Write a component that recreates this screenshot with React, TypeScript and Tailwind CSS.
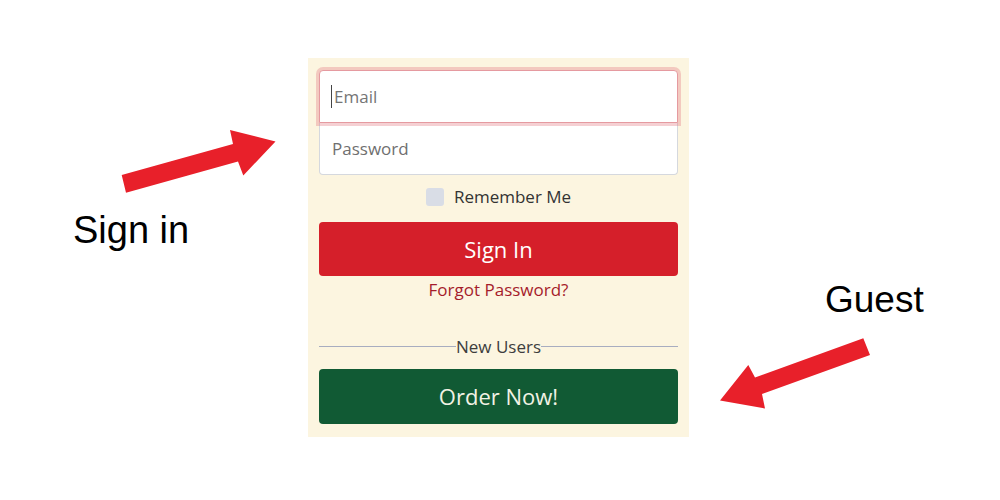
import React from 'react';

const uiFont = { fontFamily: '"Open Sans", "Noto Sans", sans-serif' };

function Arrows() {
  return (
    <svg
      className="absolute inset-0 pointer-events-none"
      width={1000}
      height={500}
      viewBox="0 0 1000 500"
    >
      {/* sign in arrow */}
      <polygon
        fill="#e8202a"
        points="121.7,175 233,144 230,130 275.5,141.5 243.3,175.5 238,161.5 126,192.7"
      />
      {/* guest arrow */}
      <polygon
        fill="#e8202a"
        points="863.3,338.3 755,377.5 748.3,365 720,400.5 765,408.5 762,394 870,355"
      />
    </svg>
  );
}

export default function App() {
  return (
    <div className="relative w-full h-[500px] bg-white overflow-hidden" style={uiFont}>
      <div className="flex pl-[308px] pt-[58px]">
        <div className="w-[381px] bg-[#fcf5e0] px-[11px] pt-[12px] pb-[13px] flex flex-col">
          <div className="relative">
            <input
              className="w-full h-[53px] bg-white border border-[#e59aa0] rounded-t-[4px] shadow-[0_0_0_3px_rgba(226,120,128,0.35)] pl-[14px] pr-[12px] text-[17px] text-[#333] placeholder:text-[#757575] outline-none"
              placeholder="Email"
              style={uiFont}
            />
            <span className="absolute left-[12px] top-[15px] w-px h-[23px] bg-[#444]" />
          </div>
          <input
            className="w-full h-[52px] bg-white border border-t-0 border-[#d5d8de] rounded-b-[4px] px-[12px] text-[17px] text-[#333] placeholder:text-[#6f6f6f] outline-none"
            placeholder="Password"
            style={uiFont}
          />
          <div className="mt-[10px] h-[24px] flex items-center justify-center gap-[10px]">
            <span className="w-[18px] h-[18px] rounded-[3px] bg-[#d9dde6]" />
            <span className="text-[17px] text-[#333]">Remember Me</span>
          </div>
          <button className="mt-[13px] h-[54px] w-full rounded-[4px] bg-[#d51f2a] text-white text-[22px]">
            Sign In
          </button>
          <div className="mt-[2px] h-[24px] flex items-center justify-center text-[17px] text-[#a51c2b]">
            Forgot Password?
          </div>
          <div className="mt-[32px] h-[24px] flex items-center">
            <div className="flex-1 h-px bg-[#a8adc0]" />
            <span className="text-[17px] text-[#3d3d3d] leading-none">New Users</span>
            <div className="flex-1 h-px bg-[#a8adc0]" />
          </div>
          <button className="mt-[11px] h-[55px] w-full rounded-[4px] bg-[#115a34] text-[#f2f2e4] text-[22px]">
            Order Now!
          </button>
        </div>
      </div>

      <Arrows />

      <div
        className="absolute left-[73px] top-[211px] text-[38px] leading-[38px] text-black"
        style={{ fontFamily: '"Liberation Sans", Arial, sans-serif' }}
      >
        Sign in
      </div>
      <div
        className="absolute left-[825px] top-[281px] text-[37px] leading-[37px] text-black"
        style={{ fontFamily: '"Liberation Sans", Arial, sans-serif' }}
      >
        Guest
      </div>
    </div>
  );
}
